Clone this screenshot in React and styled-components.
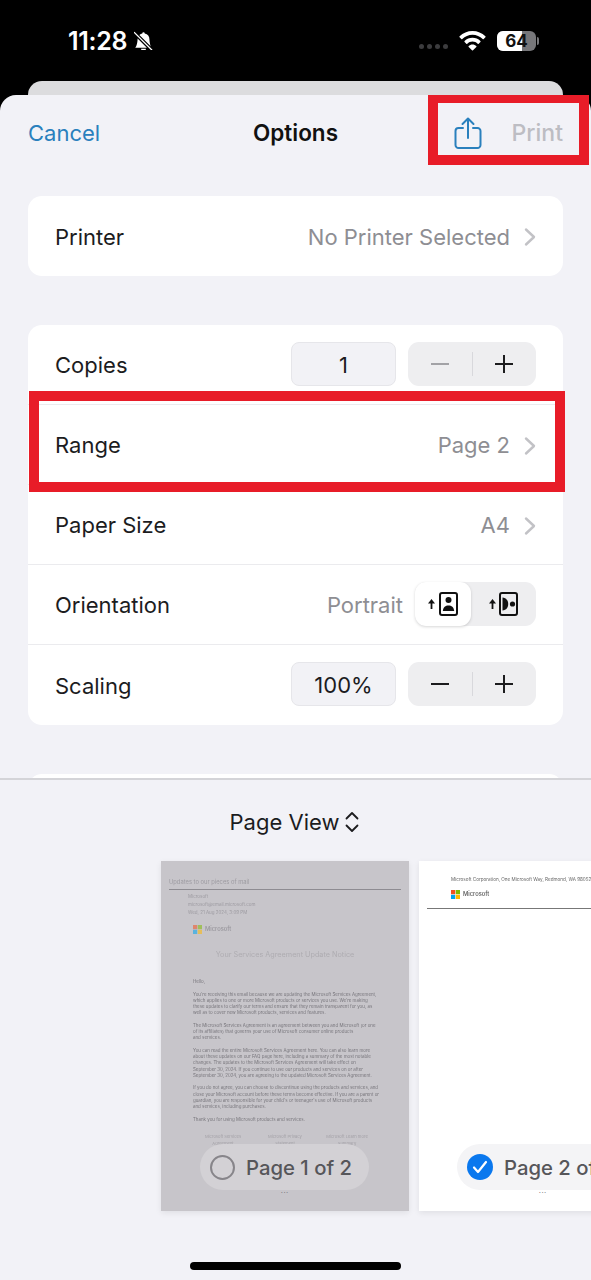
import styled, { createGlobalStyle } from 'styled-components';
import { BsBellSlashFill } from 'react-icons/bs';

const GlobalStyle = createGlobalStyle`
   html, body {
      margin: 0;
      background: #000;
      font-family: Inter, "Liberation Sans", sans-serif;
   }
`;

const introLines = [
   ['Hello,'],
   [
      "You're receiving this email because we are updating the Microsoft Services Agreement,",
      'which applies to one or more Microsoft products or services you use. We’re making',
      'these updates to clarify our terms and ensure that they remain transparent for you, as',
      'well as to cover new Microsoft products, services and features.',
   ],
   [
      'The Microsoft Services Agreement is an agreement between you and Microsoft (or one',
      'of its affiliates) that governs your use of Microsoft consumer online products',
      'and services.',
   ],
   [
      'You can read the entire Microsoft Services Agreement here. You can also learn more',
      'about these updates on our FAQ page here, including a summary of the most notable',
      'changes. The updates to the Microsoft Services Agreement will take effect on',
      'September 30, 2024. If you continue to use our products and services on or after',
      'September 30, 2024, you are agreeing to the updated Microsoft Services Agreement.',
   ],
   [
      'If you do not agree, you can choose to discontinue using the products and services, and',
      'close your Microsoft account before these terms become effective. If you are a parent or',
      "guardian, you are responsible for your child's or teenager's use of Microsoft products",
      'and services, including purchases.',
   ],
   ['Thank you for using Microsoft products and services.'],
];

const footerLinks = [
   ['Microsoft Services', 'Agreement'],
   ['Microsoft Privacy', 'Statement'],
   ['Microsoft Learn more', 'Summary'],
];

function MsLogo({ muted }) {
   return (
      <svg width='9' height='9' viewBox='0 0 10 10' opacity={muted ? 0.55 : 1}>
         <rect width='4.7' height='4.7' fill='#f25022' />
         <rect x='5.3' width='4.7' height='4.7' fill='#7fba00' />
         <rect y='5.3' width='4.7' height='4.7' fill='#00a4ef' />
         <rect x='5.3' y='5.3' width='4.7' height='4.7' fill='#ffb900' />
      </svg>
   );
}

function Chevron() {
   return (
      <ChevronBox>
         <svg width='12' height='20' viewBox='0 0 12 20' fill='none'>
            <path d='M2 2.5 10 10l-8 7.5' stroke='#c2c2c6' strokeWidth='2.4' strokeLinecap='round' strokeLinejoin='round' />
         </svg>
      </ChevronBox>
   );
}

function Stepper({ faded }) {
   return (
      <StepperBox>
         <StepperSide>
            <svg width='20' height='20' viewBox='0 0 20 20'>
               <path d='M1 10h18' stroke={faded ? '#a2a2a6' : '#1c1c1e'} strokeWidth='2' />
            </svg>
         </StepperSide>
         <StepperSide>
            <svg width='20' height='20' viewBox='0 0 20 20'>
               <path d='M1 10h18M10 1v18' stroke='#1c1c1e' strokeWidth='2' />
            </svg>
         </StepperSide>
      </StepperBox>
   );
}

function PortraitIcon() {
   return (
      <svg width='30' height='24' viewBox='0 0 30 24' fill='none'>
         <path d='M3.500 17V10' stroke='#111' strokeWidth='1.800' />
         <path d='M0 11.500 3.500 7 7 11.500Z' fill='#111' />
         <rect x='12' y='1' width='17' height='22' rx='2' stroke='#111' strokeWidth='2' />
         <circle cx='20.500' cy='8' r='3' fill='#111' />
         <path d='M14.800 19c.4-3.800 2.700-5.500 5.700-5.500s5.300 1.700 5.700 5.500Z' fill='#111' />
      </svg>
   );
}

function LandscapeIcon() {
   return (
      <svg width='29' height='24' viewBox='0 0 29 24' fill='none'>
         <path d='M3.500 17V10' stroke='#111' strokeWidth='1.800' />
         <path d='M0 11.500 3.500 7 7 11.500Z' fill='#111' />
         <rect x='11' y='1' width='17' height='22' rx='2' stroke='#111' strokeWidth='2' />
         <path d='M13.500 5.500c3.800.5 5.700 3 5.700 6.500s-1.900 6-5.700 6.500Z' fill='#111' />
         <circle cx='23.500' cy='12' r='2.600' fill='#111' />
      </svg>
   );
}

function PagePill({ page, checked }) {
   return (
      <Pill $checked={checked}>
         {checked ? (
            <Checked>
               <svg width='16' height='14' viewBox='0 0 16 14' fill='none'>
                  <path d='M2 7.500 6 12l8-10' stroke='#fff' strokeWidth='2.200' strokeLinecap='round' strokeLinejoin='round' />
               </svg>
            </Checked>
         ) : (
            <Unchecked />
         )}
         <span>Page {page} of 2</span>
      </Pill>
   );
}

export default function App() {
   return (
      <Screen>
         <GlobalStyle />
         <StatusBar>
            <Clock>
               11:28
               <MutedBell>
                  <BsBellSlashFill size={19} />
               </MutedBell>
            </Clock>
            <StatusIcons>
               <SignalDots>
                  <i />
                  <i />
                  <i />
                  <i />
               </SignalDots>
               <svg width='27' height='20' viewBox='0 0 27 20' fill='#fff'>
                  <path d='M13.500 0C8.500 0 4 2 .6 5.300a.7.7 0 0 0 0 1l1.700 1.800a.7.7 0 0 0 1 0C6 5.400 9.600 3.800 13.500 3.800s7.500 1.600 10.200 4.300a.7.7 0 0 0 1 0l1.700-1.800a.7.7 0 0 0 0-1C23 2 18.500 0 13.500 0Z' />
                  <path d='M13.500 6.700c-3 0-5.800 1.200-7.900 3.200a.7.7 0 0 0 0 1l1.700 1.800a.7.7 0 0 0 1 0c1.400-1.300 3.200-2.100 5.200-2.100s3.800.8 5.200 2.100a.7.7 0 0 0 1 0l1.700-1.800a.7.7 0 0 0 0-1c-2.100-2-4.900-3.200-7.900-3.200Z' />
                  <path d='M13.500 13.400c-1.500 0-2.800.6-3.800 1.500a.7.7 0 0 0 0 1l3.300 3.400a.7.7 0 0 0 1 0l3.300-3.400a.7.7 0 0 0 0-1c-1-.9-2.300-1.500-3.800-1.500Z' />
               </svg>
               <Battery>
                  <BatteryLevel style={{ width: '64%' }} />
                  <BatteryText>64</BatteryText>
               </Battery>
            </StatusIcons>
         </StatusBar>
         <BackSheet />
         <Sheet>
            <Options>
               <Header>
                  <Cancel>Cancel</Cancel>
                  <Title>Options</Title>
                  <HeaderActions>
                     <svg width='28' height='32' viewBox='0 0 28 32' fill='none'>
                        <path
                           d='M9 11H4.500a3 3 0 0 0-3 3v14a3 3 0 0 0 3 3h19a3 3 0 0 0 3-3V14a3 3 0 0 0-3-3H19M14 21V2M8.500 7 14 1.500 19.500 7'
                           stroke='#2a80bd'
                           strokeWidth='2'
                           strokeLinecap='round'
                           strokeLinejoin='round'
                        />
                     </svg>
                     <PrintLabel>Print</PrintLabel>
                  </HeaderActions>
                  <HeaderMark />
               </Header>
               <Card>
                  <Row>
                     <Label>Printer</Label>
                     <Value>No Printer Selected</Value>
                     <Chevron />
                  </Row>
               </Card>
               <Card>
                  <Row $divided>
                     <Label>Copies</Label>
                     <Field>1</Field>
                     <Stepper faded />
                  </Row>
                  <Row $divided>
                     <Label>Range</Label>
                     <Value>Page 2</Value>
                     <Chevron />
                     <RangeMark />
                  </Row>
                  <Row $divided>
                     <Label>Paper Size</Label>
                     <Value>A4</Value>
                     <Chevron />
                  </Row>
                  <Row $divided>
                     <Label>Orientation</Label>
                     <Value>Portrait</Value>
                     <Segments>
                        <Segment $active>
                           <PortraitIcon />
                        </Segment>
                        <Segment>
                           <LandscapeIcon />
                        </Segment>
                     </Segments>
                  </Row>
                  <Row>
                     <Label>Scaling</Label>
                     <Field>100%</Field>
                     <Stepper />
                  </Row>
               </Card>
               <Card />
            </Options>
            <Preview>
               <ViewPicker>
                  Page View
                  <svg width='14' height='22' viewBox='0 0 14 22' fill='none'>
                     <path d='M1.500 7.500 7 2l5.500 5.500M1.500 14.500 7 20l5.500-5.500' stroke='#1c1c1e' strokeWidth='1.800' strokeLinecap='round' strokeLinejoin='round' />
                  </svg>
               </ViewPicker>
               <PageStrip>
                  <PageSheet $dimmed>
                     <SoftText>
                        <MailSubject>Updates to our pieces of mail</MailSubject>
                        <MailMeta>Microsoft</MailMeta>
                        <MailMeta>microsoft@email.microsoft.com</MailMeta>
                        <MailMeta>Wed, 21 Aug 2024, 3:09 PM</MailMeta>
                        <MailLogo $inset>
                           <MsLogo muted />
                           Microsoft
                        </MailLogo>
                        <MailTitle>Your Services Agreement Update Notice</MailTitle>
                        {introLines.map((lines, i) => (
                           <Paragraph key={i}>
                              {lines.map((line) => (
                                 <div key={line}>{line}</div>
                              ))}
                           </Paragraph>
                        ))}
                        <FooterLinks>
                           {footerLinks.map((link) => (
                              <div key={link[0]}>
                                 {link[0]}
                                 <br />
                                 {link[1]}
                              </div>
                           ))}
                        </FooterLinks>
                     </SoftText>
                     <PagePill page={1} />
                     <PageDots>•••</PageDots>
                  </PageSheet>
                  <PageSheet>
                     <SoftText>
                        <PageAddress>Microsoft Corporation, One Microsoft Way, Redmond, WA 98052</PageAddress>
                        <MailLogo>
                           <MsLogo />
                           Microsoft
                        </MailLogo>
                        <PageRule />
                     </SoftText>
                     <PagePill page={2} checked />
                     <PageDots>•••</PageDots>
                  </PageSheet>
               </PageStrip>
               <HomeBar />
            </Preview>
         </Sheet>
      </Screen>
   );
}

const Screen = styled.div`
   display: flex;
   flex-direction: column;
   width: 591px;
   height: 1280px;
   overflow: hidden;
   background: #000;
`;
const StatusBar = styled.div`
   display: flex;
   justify-content: space-between;
   align-items: center;
   height: 81px;
   padding: 0 55px 0 68px;
   box-sizing: border-box;
   color: #fff;
`;
const Clock = styled.div`
   display: flex;
   align-items: center;
   gap: 7px;
   font-size: 25px;
   font-weight: 600;
   letter-spacing: -0.3px;
`;
const MutedBell = styled.span`
   display: flex;
   transform: scaleX(-1);
`;
const StatusIcons = styled.div`
   display: flex;
   align-items: center;
   gap: 11px;
`;
const SignalDots = styled.div`
   display: flex;
   gap: 3px;
   margin-top: 12px;
   i {
      width: 5px;
      height: 5px;
      border-radius: 50%;
      background: #3c3c3e;
   }
`;
const Battery = styled.div`
   position: relative;
   width: 39px;
   height: 20px;
   border-radius: 6px;
   background: #77777a;
   &::after {
      content: '';
      position: absolute;
      right: -3px;
      top: 6px;
      width: 2px;
      height: 8px;
      border-radius: 0 2px 2px 0;
      background: #77777a;
   }
`;
const BatteryLevel = styled.div`
   height: 100%;
   border-radius: 6px 0 0 6px;
   background: #fff;
`;
const BatteryText = styled.div`
   position: absolute;
   inset: 0;
   text-align: center;
   font-size: 17px;
   font-weight: 700;
   line-height: 20px;
   color: #111;
`;
const BackSheet = styled.div`
   height: 14px;
   margin: 0 28px;
   border-radius: 14px 14px 0 0;
   background: #dcdcde;
`;
const Sheet = styled.div`
   display: flex;
   flex-direction: column;
   flex: 1;
   min-height: 0;
   border-radius: 16px 16px 0 0;
   background: #f2f2f7;
`;
const Options = styled.div`
   display: flex;
   flex-direction: column;
   gap: 49px;
   height: 683px;
   flex-shrink: 0;
   padding: 0 28px;
   box-sizing: border-box;
   overflow: hidden;
`;
const Header = styled.div`
   position: relative;
   display: flex;
   justify-content: space-between;
   align-items: center;
   height: 77px;
   padding-bottom: 2px;
   box-sizing: border-box;
   margin-bottom: -25px;
   flex-shrink: 0;
   font-size: 22px;
`;
const Cancel = styled.div`
   color: #2a80bd;
`;
const Title = styled.div`
   position: absolute;
   left: 0;
   right: 0;
   text-align: center;
   font-size: 22.500px;
   font-weight: 600;
   color: #111;
`;
const HeaderActions = styled.div`
   display: flex;
   align-items: center;
   gap: 30px;
`;
const PrintLabel = styled.div`
   font-size: 23px;
   font-weight: 500;
   color: #bdbdc3;
`;
const HeaderMark = styled.div`
   position: absolute;
   top: -2px;
   right: -26px;
   width: 161px;
   height: 72px;
   box-sizing: border-box;
   border: 10px solid #e81c28;
`;
const Card = styled.div`
   flex-shrink: 0;
   border-radius: 14px;
   background: #fff;
   min-height: 80px;
`;
const Row = styled.div`
   position: relative;
   display: flex;
   align-items: center;
   gap: 12px;
   height: 80px;
   padding: 0 27px;
   box-sizing: border-box;
   border-bottom: ${(p) => (p.$divided ? '1px solid #ebebee' : 'none')};
`;
const Label = styled.div`
   flex: 1;
   margin-top: 1px;
   font-size: 22px;
   color: #1c1c1e;
`;
const Value = styled.div`
   margin-top: 1px;
   font-size: 22px;
   color: #8e8e93;
`;
const ChevronBox = styled.div`
   display: flex;
   margin: 2px 0 0 2px;
`;
const Field = styled.div`
   width: 105px;
   height: 44px;
   margin-bottom: 2px;
   box-sizing: border-box;
   border: 1px solid #e6e6ea;
   border-radius: 8px;
   background: #f2f2f6;
   font-size: 22px;
   line-height: 44px;
   text-align: center;
   color: #1c1c1e;
`;
const StepperBox = styled.div`
   display: flex;
   align-items: center;
   width: 128px;
   height: 44px;
   margin-bottom: 2px;
   border-radius: 11px;
   background: #eeeef0;
`;
const StepperSide = styled.div`
   display: flex;
   justify-content: center;
   align-items: center;
   flex: 1;
   height: 24px;
   & + & {
      border-left: 1px solid #d8d8dc;
   }
`;
const RangeMark = styled.div`
   position: absolute;
   top: -14px;
   left: 1px;
   right: -2px;
   height: 101px;
   box-sizing: border-box;
   border: 10px solid #e81c28;
`;
const Segments = styled.div`
   display: flex;
   width: 121px;
   height: 44px;
   margin-bottom: 2px;
   border-radius: 11px;
   background: #eeeef0;
`;
const Segment = styled.div`
   display: flex;
   justify-content: center;
   align-items: center;
   flex: ${(p) => (p.$active ? '0 0 56px' : '1')};
   border-radius: 11px;
   background: ${(p) => (p.$active ? '#fff' : 'transparent')};
   box-shadow: ${(p) => (p.$active ? '0 1px 3px rgba(0, 0, 0, 0.16)' : 'none')};
`;
const Preview = styled.div`
   position: relative;
   flex: 1;
   display: flex;
   flex-direction: column;
   border-top: 2px solid #d4d4d8;
   overflow: hidden;
`;
const ViewPicker = styled.div`
   display: flex;
   justify-content: center;
   align-items: center;
   gap: 6px;
   height: 81px;
   padding: 2px 2px 0 0;
   box-sizing: border-box;
   font-size: 22px;
   color: #1c1c1e;
`;
const PageStrip = styled.div`
   display: flex;
   gap: 10px;
   padding-left: 161px;
`;
const PageSheet = styled.div`
   position: relative;
   flex-shrink: 0;
   width: 248px;
   height: 350px;
   padding-top: ${(p) => (p.$dimmed ? '17px' : '15px')};
   box-sizing: border-box;
   overflow: hidden;
   background: ${(p) => (p.$dimmed ? '#c7c5ca' : '#fff')};
   box-shadow: 0 2px 6px rgba(0, 0, 0, 0.08);
`;
const SoftText = styled.div`
   filter: blur(0.4px);
`;
const MailSubject = styled.div`
   margin: 0 8px;
   padding-bottom: 3px;
   border-bottom: 1px solid #8e8c92;
   font-size: 5.800px;
   line-height: 8px;
   color: #9d9ba1;
`;
const MailMeta = styled.div`
   margin-left: 27px;
   font-size: 4.500px;
   line-height: 8px;
   color: #9d9ba1;
   &:nth-child(2) {
      margin-top: 3px;
   }
`;
const MailLogo = styled.div`
   display: flex;
   align-items: center;
   gap: 3px;
   margin: ${(p) => (p.$inset ? '7px 0 0 32px' : '5px 0 0 32px')};
   font-size: 5.800px;
   font-weight: 500;
   line-height: 10px;
   color: ${(p) => (p.$inset ? '#98969c' : '#555')};
`;
const MailTitle = styled.div`
   margin: 15px 0 18px;
   text-align: center;
   font-size: 7.250px;
   line-height: 12px;
   color: #aeacb1;
`;
const Paragraph = styled.div`
   margin: 0 0 6.300px 32px;
   font-size: 4.450px;
   line-height: 6.250px;
   white-space: nowrap;
   color: #78767c;
`;
const FooterLinks = styled.div`
   display: grid;
   grid-template-columns: repeat(3, 62px);
   justify-content: center;
   margin-top: 10px;
   text-align: center;
   font-size: 4.100px;
   line-height: 7px;
   color: #a3a1a7;
`;
const PageAddress = styled.div`
   margin-left: 32px;
   font-size: 4.600px;
   line-height: 8px;
   white-space: nowrap;
   color: #666;
`;
const PageRule = styled.div`
   margin: 9px 0 0 8px;
   border-top: 1px solid #777;
`;
const Pill = styled.div`
   position: absolute;
   bottom: 21px;
   left: ${(p) => (p.$checked ? '38px' : '39px')};
   display: flex;
   align-items: center;
   gap: 11px;
   width: 169px;
   height: 46px;
   padding-left: 10px;
   box-sizing: border-box;
   border-radius: 23px;
   background: ${(p) => (p.$checked ? '#f4f4f6' : '#d3d1d5')};
   font-size: 20.300px;
   font-weight: 500;
   white-space: nowrap;
   color: #56565a;
   span {
      padding-top: 1px;
   }
`;
const PageDots = styled.div`
   position: absolute;
   bottom: 17px;
   left: 0;
   right: 0;
   text-align: center;
   font-size: 3px;
   line-height: 4px;
   letter-spacing: 1px;
   color: #77757b;
`;
const Unchecked = styled.div`
   width: 25px;
   height: 25px;
   flex-shrink: 0;
   box-sizing: border-box;
   border: 2px solid #87858a;
   border-radius: 50%;
`;
const Checked = styled.div`
   display: flex;
   justify-content: center;
   align-items: center;
   width: 26px;
   height: 26px;
   flex-shrink: 0;
   border-radius: 50%;
   background: #0a78ee;
`;
const HomeBar = styled.div`
   position: absolute;
   bottom: 10px;
   left: 190px;
   width: 211px;
   height: 8px;
   border-radius: 4px;
   background: #000;
`;
